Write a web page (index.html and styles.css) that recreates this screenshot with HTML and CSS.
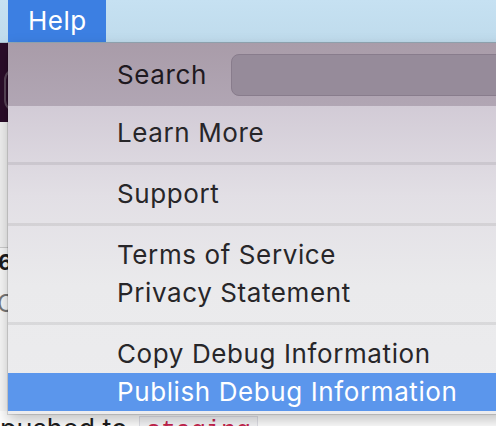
FILE: index.html
```html
<!DOCTYPE html>
<html lang="en">
<head>
    <meta charset="UTF-8">
    <meta name="viewport" content="width=device-width, initial-scale=1.0">
    <title>Help</title>
    <link rel="stylesheet" href="styles.css">
</head>
<body>

<!-- Menu bar -->
<div class="menubar">
    <span class="menu-title open">Help</span>
</div>

<!-- App window under the menu -->
<div class="app">
    <div class="app-header">
        <div class="app-search"></div>
    </div>
    <div class="app-toolbar"></div>
    <div class="app-content">
        <p class="commit-count">6 commits</p>
        <p class="commit-meta">Changes</p>
        <p class="push-note">pushed to <code>staging</code></p>
    </div>
</div>

<!-- Help menu -->
<div class="menu">
    <div class="menu-search">
        <span class="search-label">Search</span>
        <div class="search-field"></div>
    </div>
    <div class="menu-list">
        <div class="item">Learn More</div>
        <div class="sep"></div>
        <div class="item">Support</div>
        <div class="sep"></div>
        <div class="item">Terms of Service</div>
        <div class="item">Privacy Statement</div>
        <div class="sep"></div>
        <div class="item">Copy Debug Information</div>
        <div class="item active">Publish Debug Information</div>
    </div>
</div>

</body>
</html>
```

FILE: styles.css
```css
/* Reset default margin and padding */
* {
    margin: 0;
    padding: 0;
    box-sizing: border-box;
}

body {
    width: 496px;
    height: 426px;
    overflow: hidden;
    position: relative;
    font-family: Inter, "Noto Sans", sans-serif;
    background-color: #fff;
}

/* Menu bar */
.menubar {
    height: 43px;
    padding-left: 8px;
    display: flex;
    background: linear-gradient(#c6e1f2, #bfdbec);
    border-bottom: 1px solid #a9c0ce;
}

.menu-title {
    padding: 0 19px 0 20px;
    font-size: 26px;
    letter-spacing: 0.5px;
    line-height: 42px;
    color: #111;
}

.menu-title.open {
    background-color: #3c7fe2;
    color: #fff;
}

/* App window */
.app-header {
    height: 79px;
    padding: 25px 0 0 4px;
    background-color: #2b0d2a;
}

.app-search {
    width: 200px;
    height: 44px;
    border: 2px solid #5a475a;
    border-radius: 12px;
}

.app-toolbar {
    height: 126px;
    background-color: #f1f1f1;
    border-bottom: 1px solid #cdcdcd;
}

.app-content {
    background-color: #f8f8f8;
}

.commit-count {
    font-size: 22px;
    font-weight: bold;
    line-height: 28px;
    color: #1d1c1d;
    margin-left: -2px;
}

.commit-meta {
    margin-top: 6px;
    font-size: 24px;
    line-height: 44px;
    color: #777;
    margin-left: -3px;
}

.push-note {
    margin-top: 85px;
    font-size: 27px;
    line-height: 36px;
    color: #1d1c1d;
    background-color: #fff;
}

.push-note code {
    font-family: "Liberation Mono", monospace;
    font-size: 25px;
    color: #c7254e;
    background-color: #f7f7f9;
    border: 1px solid #e1e1e8;
    padding: 0 6px;
    margin-left: 4px;
}

/* Help menu panel */
.menu {
    position: absolute;
    top: 43px;
    left: 8px;
    width: 500px;
    background-color: #ebebed;
    box-shadow: 0 0 0 1px rgba(0, 0, 0, 0.12), 0 6px 14px rgba(0, 0, 0, 0.25);
    font-size: 26px;
    letter-spacing: 0.6px;
    color: #272629;
}

.menu-search {
    height: 63px;
    padding-left: 109px;
    display: flex;
    align-items: center;
    background: linear-gradient(#a99ca9, #b1a6b4);
}

.search-label {
    color: #1e1920;
}

.search-field {
    flex: 1;
    height: 42px;
    margin-left: 24px;
    background-color: #968b9a;
    border: 1px solid #887c8c;
    border-radius: 8px;
}

.menu-list {
    padding: 8px 0 3px;
    background: linear-gradient(#d2cbd6 0, #e2dfe5 90px, #eaeaec 180px, #ececee 100%);
}

.item {
    height: 38px;
    line-height: 38px;
    padding-left: 109px;
    white-space: nowrap;
}

.item.active {
    background-color: #5b96ec;
    color: #fff;
}

.sep {
    height: 3px;
    margin: 10px 0;
    background-color: rgba(0, 0, 0, 0.075);
}
```
